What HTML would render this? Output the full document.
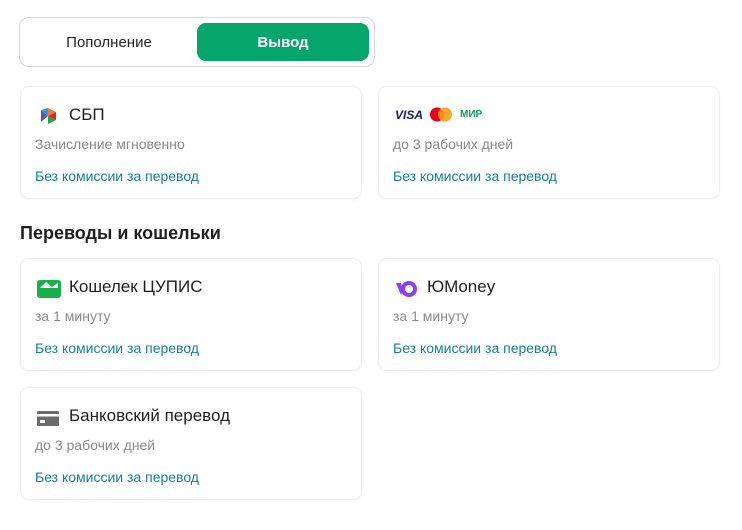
<!DOCTYPE html>
<html><head><meta charset="utf-8"><style>
body{margin:0;background:#fff;font-family:"Liberation Sans",sans-serif;width:742px;height:530px;position:relative;overflow:hidden}
.tg{position:absolute;left:19px;top:17px;width:356px;height:50px;border:1px solid #d9d9d9;border-radius:10px;box-sizing:border-box}
.tg .a{position:absolute;left:0;top:0;width:178px;height:48px;line-height:50px;text-align:center;font-size:15px;color:#222}
.tg .b{position:absolute;left:177px;top:5px;width:172px;height:38px;line-height:39px;border-radius:9px;background:#05a56e;color:#fff;text-align:center;font-size:15px;font-weight:bold}
.c{position:absolute;width:342px;height:113px;border:1px solid #eeeeee;border-radius:9px;box-sizing:border-box;box-shadow:0 1px 3px rgba(0,0,0,.04)}
.t{position:absolute;left:48px;top:18px;font-size:17px;color:#1e1e1e}
.s{position:absolute;left:14px;top:49px;font-size:14px;color:#8a8a8a}
.l{position:absolute;left:14px;top:81px;font-size:14px;color:#14829a}
.ic{position:absolute;left:16px;top:20px}
h2{position:absolute;left:20px;top:223px;margin:0;font-size:18px;font-weight:bold;color:#1e1e1e}
</style></head><body>
<div class="tg"><div class="a">Пополнение</div><div class="b">Вывод</div></div>

<div class="c" style="left:20px;top:86px">
<svg class="ic" width="22" height="20" viewBox="0 0 22 20" style="left:18px;top:19px"><polygon points="2,4 9,10 2,16" fill="#5b57a8"/><polygon points="9,2 17,6 9,10" fill="#f07b2a"/><polygon points="9,10 17,6 17,14" fill="#e5212a"/><polygon points="9,10 17,14 9,18" fill="#1fa34a"/><polygon points="2,4 9,2 9,10" fill="#1ca3d8"/></svg>
<div class="t">СБП</div><div class="s">Зачисление мгновенно</div><div class="l">Без комиссии за перевод</div></div>

<div class="c" style="left:378px;top:86px">
<div style="position:absolute;left:16px;top:21px;font-size:12px;font-weight:bold;font-style:italic;color:#1a1f71">VISA</div>
<svg style="position:absolute;left:51px;top:20px" width="22" height="15"><circle cx="7" cy="7.5" r="7" fill="#eb001b"/><circle cx="15" cy="7.5" r="7" fill="#f79e1b" opacity=".9"/></svg>
<div style="position:absolute;left:81px;top:22px;font-size:10px;font-weight:bold;color:#0f9d58">МИР</div>
<div class="s">до 3 рабочих дней</div><div class="l">Без комиссии за перевод</div></div>

<h2>Переводы и кошельки</h2>

<div class="c" style="left:20px;top:258px">
<svg class="ic" width="24" height="20" viewBox="0 0 24 20"><rect x="0" y="1" width="24" height="18" rx="3" fill="#17b04a"/><path d="M3 9 L9 3 L15 8 L21 4 L21 9 Z" fill="#fff"/></svg>
<div class="t">Кошелек ЦУПИС</div><div class="s">за 1 минуту</div><div class="l">Без комиссии за перевод</div></div>

<div class="c" style="left:378px;top:258px">
<svg class="ic" width="22" height="20" viewBox="0 0 22 20"><path d="M1 4 L6 4 L8 12 L6 16 Z" fill="#8b3ffd"/><circle cx="14" cy="10" r="6" fill="none" stroke="#8b3ffd" stroke-width="4"/></svg>
<div class="t">ЮMoney</div><div class="s">за 1 минуту</div><div class="l">Без комиссии за перевод</div></div>

<div class="c" style="left:20px;top:387px">
<svg class="ic" width="22" height="20" viewBox="0 0 22 20"><rect x="0" y="3" width="22" height="15" rx="1.5" fill="#6b6b6b"/><rect x="0" y="6" width="22" height="2.5" fill="#fff"/><rect x="3" y="12" width="5" height="3" fill="#fff"/></svg>
<div class="t">Банковский перевод</div><div class="s">до 3 рабочих дней</div><div class="l">Без комиссии за перевод</div></div>
</body></html>
